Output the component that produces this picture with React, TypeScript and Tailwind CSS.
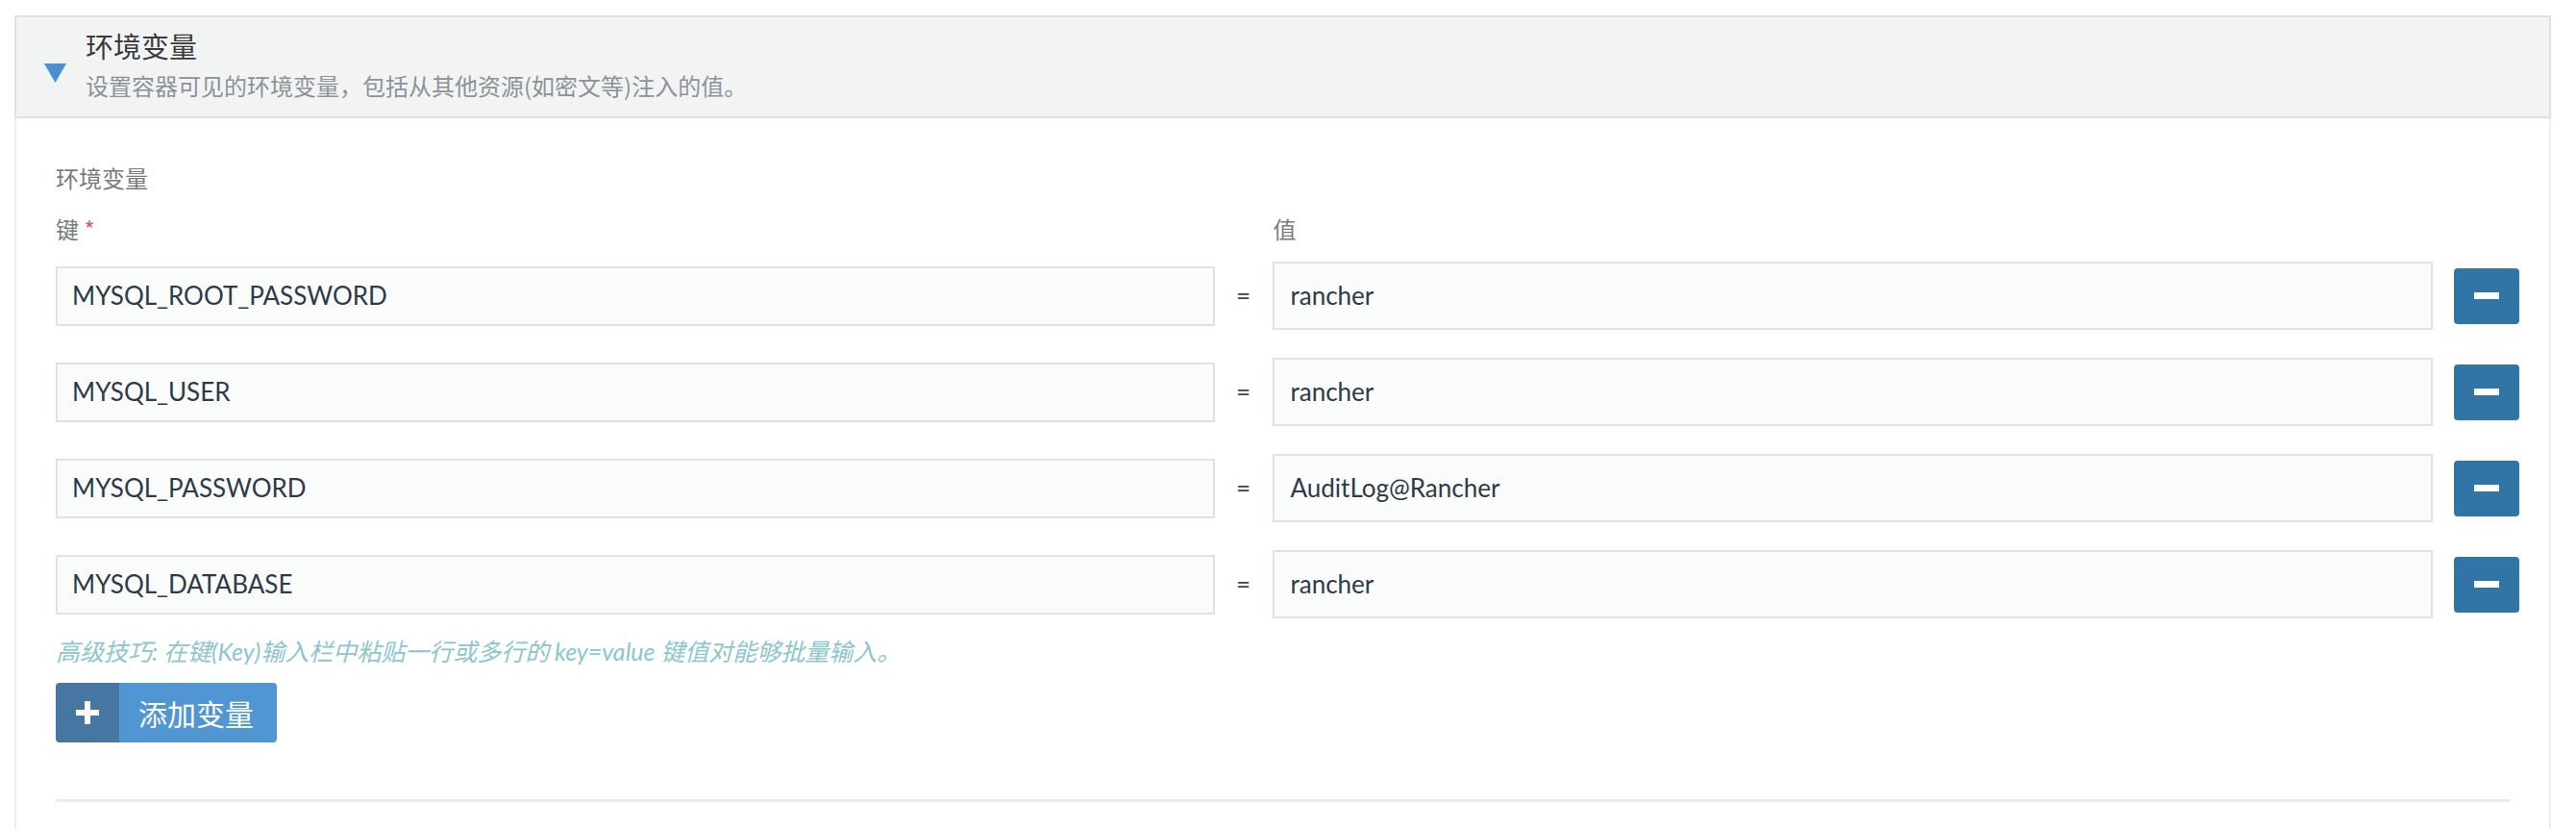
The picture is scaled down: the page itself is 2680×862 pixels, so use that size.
const rows = [
  { key: 'MYSQL_ROOT_PASSWORD', value: 'rancher' },
  { key: 'MYSQL_USER', value: 'rancher' },
  { key: 'MYSQL_PASSWORD', value: 'AuditLog@Rancher' },
  { key: 'MYSQL_DATABASE', value: 'rancher' },
]

function MinusButton() {
  return (
    <button className="ml-[22px] flex h-[58px] w-[68px] shrink-0 items-center justify-center rounded-[4px] bg-[#3174a6]">
      <span className="block h-[7px] w-[26px] bg-white" />
    </button>
  )
}

export default function App() {
  return (
    <div className="h-[862px] overflow-hidden bg-white pt-4 pl-[15px] pr-[26px] font-['Lato','Noto_Sans_CJK_SC',sans-serif]">
      {/* header */}
      <div className="flex h-[107px] items-center border-2 border-[#dde2e4] bg-[#f2f4f4] pb-[6px] pl-[29px]">
        <svg width="23" height="20" viewBox="0 0 23 20" className="mt-[18px] shrink-0">
          <polygon points="0,0 23,0 11.5,20" fill="#4a8fd3" />
        </svg>
        <div className="ml-[20px] flex flex-col">
          <h2 className="text-[29px] leading-[40px] text-[#3a3a3a] font-['Noto_Sans_CJK_SC',sans-serif]">环境变量</h2>
          <p className="mt-[5px] text-[24px] leading-[34px] text-[#8c9298] font-['Noto_Sans_CJK_SC',sans-serif]">
            设置容器可见的环境变量，包括从其他资源(如密文等)注入的值。
          </p>
        </div>
      </div>

      {/* body */}
      <div className="h-[739px] border-x-2 border-[#eceff0] pt-[45px] pl-[41px] pr-[31px]">
        <div className="text-[24px] leading-[34px] text-[#777c80] font-['Noto_Sans_CJK_SC',sans-serif]">环境变量</div>
        <div className="mt-[19px] flex text-[24px] leading-[34px] text-[#777c80] font-['Noto_Sans_CJK_SC',sans-serif]">
          <div className="flex-1">
            键 <span className="text-[#e05a5a]">*</span>
          </div>
          <div className="w-[60px]" />
          <div className="flex-1">值</div>
          <div className="w-[90px]" />
        </div>

        <div className="mt-[17px] flex flex-col gap-[29px]">
          {rows.map((r) => (
            <div key={r.key} className="flex items-center">
              <div className="flex h-[62px] flex-1 items-center border-2 border-[#dfe3e6] bg-[#fafbfb] pl-[15px] text-[26px] text-[#2e3a4a]">
                {r.key}
              </div>
              <div className="flex w-[60px] justify-center text-[26px] text-[#444]">=</div>
              <div className="flex h-[71px] flex-1 items-center border-2 border-[#dfe3e6] bg-[#fafbfb] pl-[17px] text-[26px] text-[#2e3a4a]">
                {r.value}
              </div>
              <MinusButton />
            </div>
          ))}
        </div>

        <p className="mt-[17px] text-[25px] italic leading-[34px] text-[#8cc6ce]">
          高级技巧: 在键(Key)输入栏中粘贴一行或多行的 key=value 键值对能够批量输入。
        </p>

        <button className="mt-[16px] flex h-[62px] w-[230px] overflow-hidden rounded-[4px]">
          <span className="flex h-full w-[66px] items-center justify-center bg-[#4677a2]">
            <svg width="24" height="24" viewBox="0 0 24 24">
              <rect x="9" y="0" width="6" height="24" fill="white" />
              <rect x="0" y="9" width="24" height="6" fill="white" />
            </svg>
          </span>
          <span className="flex h-full flex-1 items-center bg-[#4f96d3] pl-[20px] text-[30px] text-white font-['Noto_Sans_CJK_SC',sans-serif]">
            添加变量
          </span>
        </button>

        <div className="mt-[59px] mr-[10px] h-[3px] bg-[#e8ecec]" />
      </div>
    </div>
  )
}
